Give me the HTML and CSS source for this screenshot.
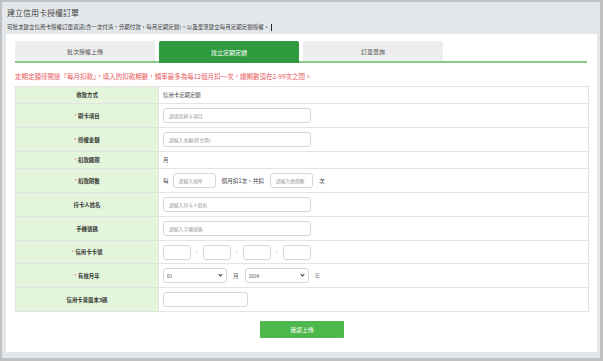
FILE: index.html
```html
<!DOCTYPE html>
<html lang="zh-Hant">
<head>
  <meta charset="UTF-8">
  <title>建立信用卡授權訂單</title>
  <link rel="stylesheet" href="styles.css">
</head>
<body>

<div class="frame">
  <div class="page-head">
    <h1>建立信用卡授權訂單</h1>
    <p class="intro">可批次建立信用卡授權訂單資訊(含一次付清，分期付款，每月定期定額)，以及單筆建立每月定期定額授權。<span class="caret"></span></p>
  </div>

  <div class="panel">
    <div class="tabs">
      <div class="tab">批次授權上傳</div>
      <div class="tab active">建立定期定額</div>
      <div class="tab">訂單查詢</div>
    </div>

    <p class="notice">定期定額僅開放「每月扣款」，填入的扣款期數，頻率最多為每12個月扣一次，總期數須在2-99次之間。</p>

    <table class="form-table">
      <tr class="short">
        <th>收款方式</th>
        <td>信用卡定期定額</td>
      </tr>
      <tr>
        <th><span class="req">*</span> 刷卡項目</th>
        <td><input type="text" class="wide" placeholder="請填寫刷卡項目"></td>
      </tr>
      <tr>
        <th><span class="req">*</span> 授權金額</th>
        <td><input type="text" class="wide" placeholder="請輸入金額(新台幣)"></td>
      </tr>
      <tr class="short">
        <th><span class="req">*</span> 扣款週期</th>
        <td>月</td>
      </tr>
      <tr>
        <th><span class="req">*</span> 扣款期數</th>
        <td>
          <div class="inline">
            <span>每</span>
            <input type="text" class="mid first" placeholder="請輸入頻率">
            <span class="gap-text">個月扣1次，共扣</span>
            <input type="text" class="mid last" placeholder="請輸入總期數">
            <span>次</span>
          </div>
        </td>
      </tr>
      <tr>
        <th>持卡人姓名</th>
        <td><input type="text" class="wide" placeholder="請輸入持卡人姓名"></td>
      </tr>
      <tr>
        <th>手機號碼</th>
        <td><input type="text" class="wide" placeholder="請輸入手機號碼"></td>
      </tr>
      <tr class="card-row">
        <th><span class="req">*</span> 信用卡卡號</th>
        <td>
          <div class="inline card">
            <input type="text" class="quad">
            <span>-</span>
            <input type="text" class="quad">
            <span>-</span>
            <input type="text" class="quad">
            <span>-</span>
            <input type="text" class="quad">
          </div>
        </td>
      </tr>
      <tr>
        <th><span class="req">*</span> 有效月年</th>
        <td>
          <div class="inline expiry">
            <span class="select-wrap"><select><option>01</option></select></span>
            <span class="unit">月</span>
            <span class="select-wrap"><select><option>2024</option></select></span>
            <span class="unit">年</span>
          </div>
        </td>
      </tr>
      <tr>
        <th>信用卡背面末3碼</th>
        <td><input type="text" class="cvv"></td>
      </tr>
    </table>

    <div class="actions">
      <button type="button" class="btn-submit">確認上傳</button>
    </div>
  </div>
</div>

</body>
</html>
```

FILE: styles.css
```css
html, body { margin: 0; padding: 0; }
body { font-family: "Noto Sans CJK TC", "Noto Sans", sans-serif; color: #444; background: #bfc1c3; }

.frame { box-sizing: border-box; width: 603px; height: 361px; border: 2px solid #bfc1c3; border-right-width: 3px; border-bottom-width: 3px; background: #e5e8eb; padding: 0 3px 6px 4px; display: flex; flex-direction: column; }

.page-head { height: 32px; padding-left: 1px; }
h1 { margin: 0; padding-top: 5px; font-size: 8px; line-height: 12px; font-weight: normal; color: #444; }
.intro { margin: 4px 0 0; font-size: 5.5px; line-height: 8px; color: #333; display: flex; align-items: center; }
.caret { display: inline-block; width: 1px; height: 7px; background: #222; margin-left: 2px; }

.panel { flex: 1; background: #fff; padding: 7px 8px 0 9px; }

.tabs { display: flex; gap: 4px; border-bottom: 2px solid #88c98c; width: 572px; height: 20px; }
.tab { width: 140px; height: 20px; background: #eeeeee; color: #555; font-size: 6px; display: flex; align-items: center; justify-content: center; border-radius: 2px 2px 0 0; }
.tab.active { background: #2f9a3e; color: #fff; height: 22px; }

.notice { margin: 9px 0 6px; font-size: 6.5px; line-height: 8px; color: #e9585b; }

.form-table { width: 574px; border-collapse: collapse; font-size: 5.4px; }
.form-table th, .form-table td { border: 1px solid #e3e3e3; height: 23px; padding: 0; }
.form-table tr.short th, .form-table tr.short td { height: 16px; }
.form-table tr.card-row th, .form-table tr.card-row td { height: 22px; }
.form-table th { width: 142px; background: #e3f5da; color: #333; font-weight: 600; text-align: center; }
.form-table td { padding-left: 4px; color: #444; }
.req { color: #e9585b; font-weight: normal; }

input, select { box-sizing: border-box; height: 15px; border: 1px solid #d6d6d6; border-radius: 3px; font-family: inherit; font-size: 4.8px; color: #444; padding: 0 5px; background: #fff; margin: 0; }
input::placeholder { color: #999; }
input.wide { width: 148px; }
input.mid { width: 43px; }
input.quad { width: 28px; }
input.cvv { width: 85px; }

.inline { display: flex; align-items: center; }
.inline span { font-size: 5.6px; }
.inline input.first { margin-left: 4px; }
.gap-text { margin: 0 6px; }
.inline input.last { margin-right: 6px; }
.card { gap: 5px; }
.card span { color: #777; }

.select-wrap { position: relative; display: inline-block; }
.expiry select { width: 64px; padding: 0 3px; -webkit-appearance: none; appearance: none; }
.select-wrap::after { content: ""; position: absolute; right: 5px; top: 5px; width: 2px; height: 2px; border-right: 1px solid #333; border-bottom: 1px solid #333; transform: rotate(45deg); pointer-events: none; }
.expiry .unit { margin: 0 6px; color: #555; }
.expiry .unit:last-child { margin-right: 0; color: #999; }

.actions { display: flex; justify-content: center; padding-top: 9px; }
.btn-submit { width: 84px; height: 17px; border: 0; border-radius: 1px; background: #4db84b; color: #fff; font-family: inherit; font-size: 5.8px; }
```
